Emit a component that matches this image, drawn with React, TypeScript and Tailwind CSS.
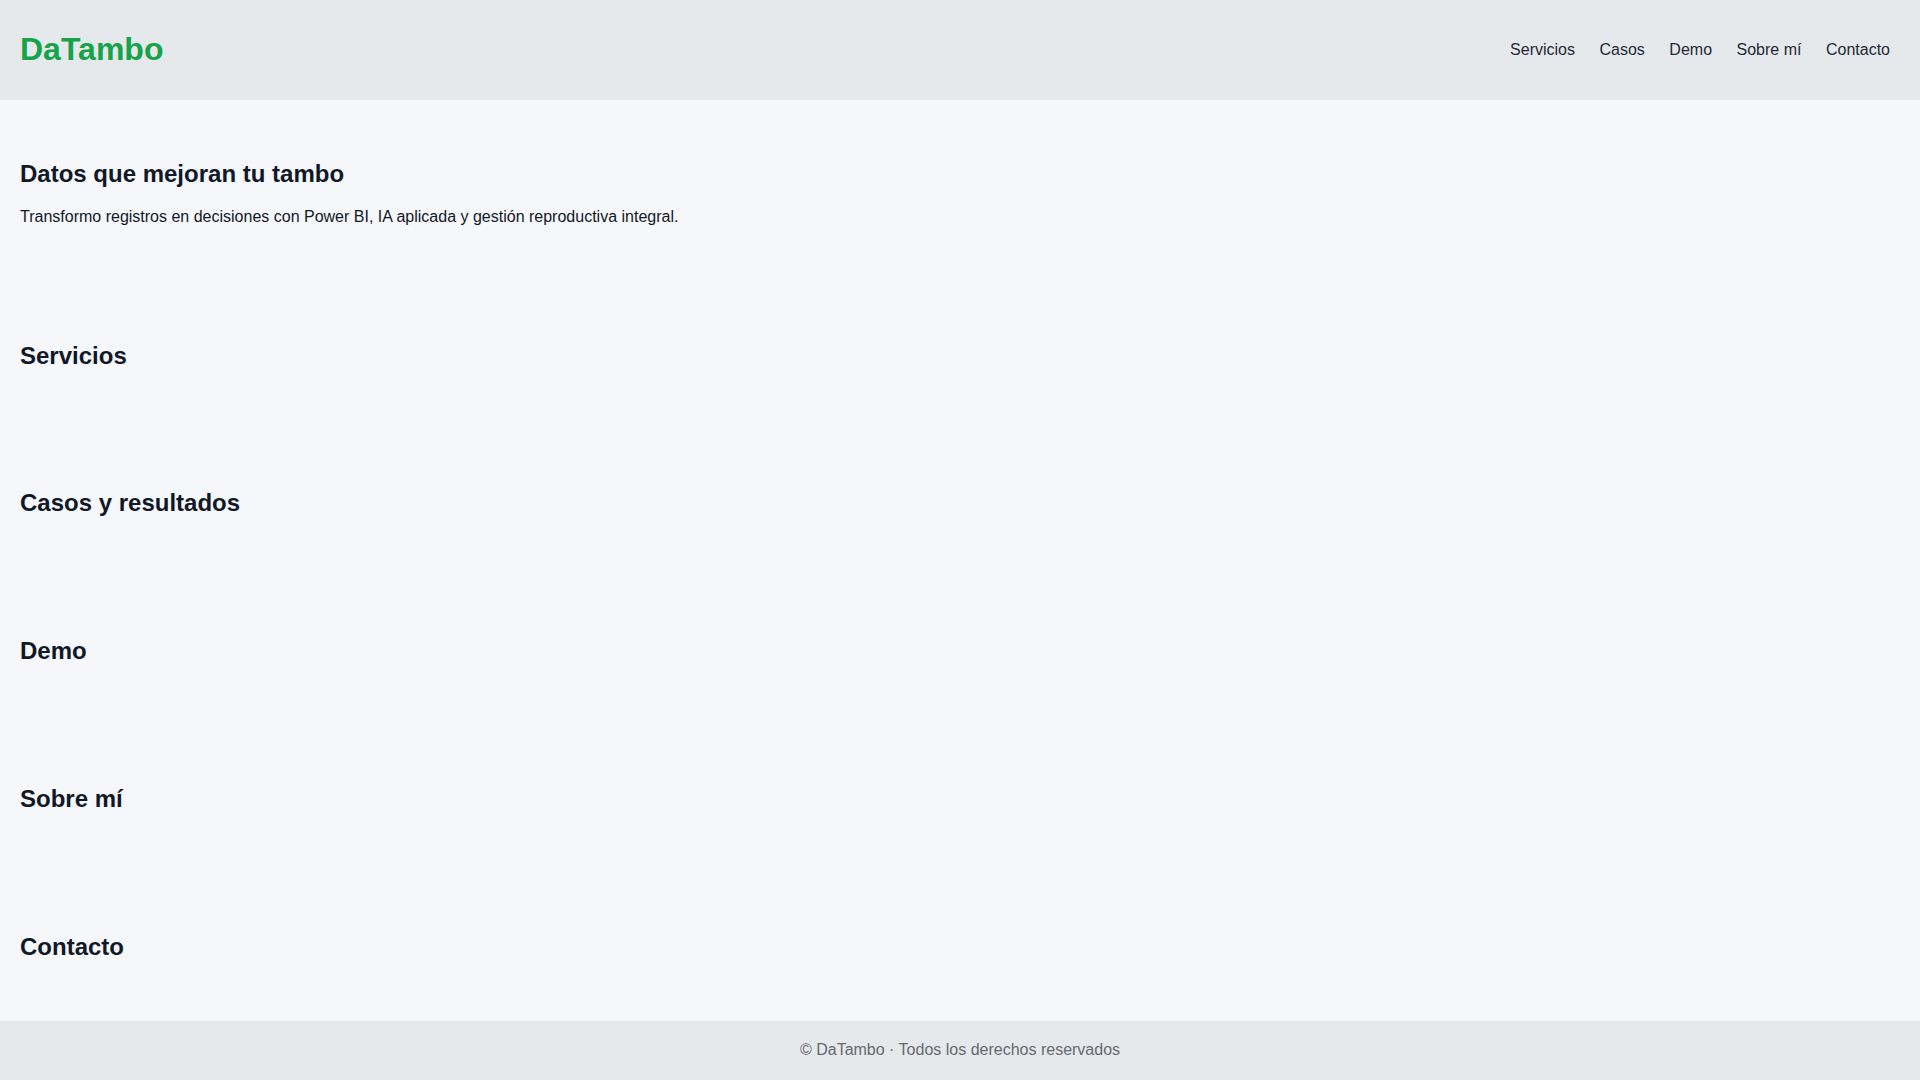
export default function App() {
  const sections = ["Servicios", "Casos y resultados", "Demo", "Sobre mí", "Contacto"];
  const nav = ["Servicios", "Casos", "Demo", "Sobre mí", "Contacto"];
  return (
    <div className="min-h-screen bg-[#f6f7fa] text-[#111827]" style={{ fontFamily: '"Liberation Sans", Arial, sans-serif' }}>
      <header className="h-[100px] bg-[#e5e9ec] flex items-center justify-between pl-5 pr-[30px]">
        <div className="text-[32px] font-bold leading-none text-[#16a34a] -mt-[2px]">DaTambo</div>
        <nav className="flex items-center gap-[24.5px] text-[16px] text-[#1f2937]">
          {nav.map((n) => (
            <a key={n} href="#" className="leading-6">{n}</a>
          ))}
        </nav>
      </header>
      <main>
        <section className="px-5 pt-14 pb-[53px]">
          <h1 className="text-2xl font-bold leading-9">Datos que mejoran tu tambo</h1>
          <p className="mt-[13px] text-base leading-6">Transformo registros en decisiones con Power BI, IA aplicada y gestión reproductiva integral.</p>
        </section>
        {sections.map((s, i) => (
          <section key={s} className={i === 0 ? "px-5 pt-14 pb-[55px]" : "px-5 py-14"}>
            <h2 className="text-2xl font-bold leading-9">{s}</h2>
          </section>
        ))}
      </main>
      <footer className="bg-[#e5e9ec] pt-[17px] pb-[19px] text-center text-base leading-6 text-[#666a70]">
        © DaTambo · Todos los derechos reservados
      </footer>
    </div>
  );
}
